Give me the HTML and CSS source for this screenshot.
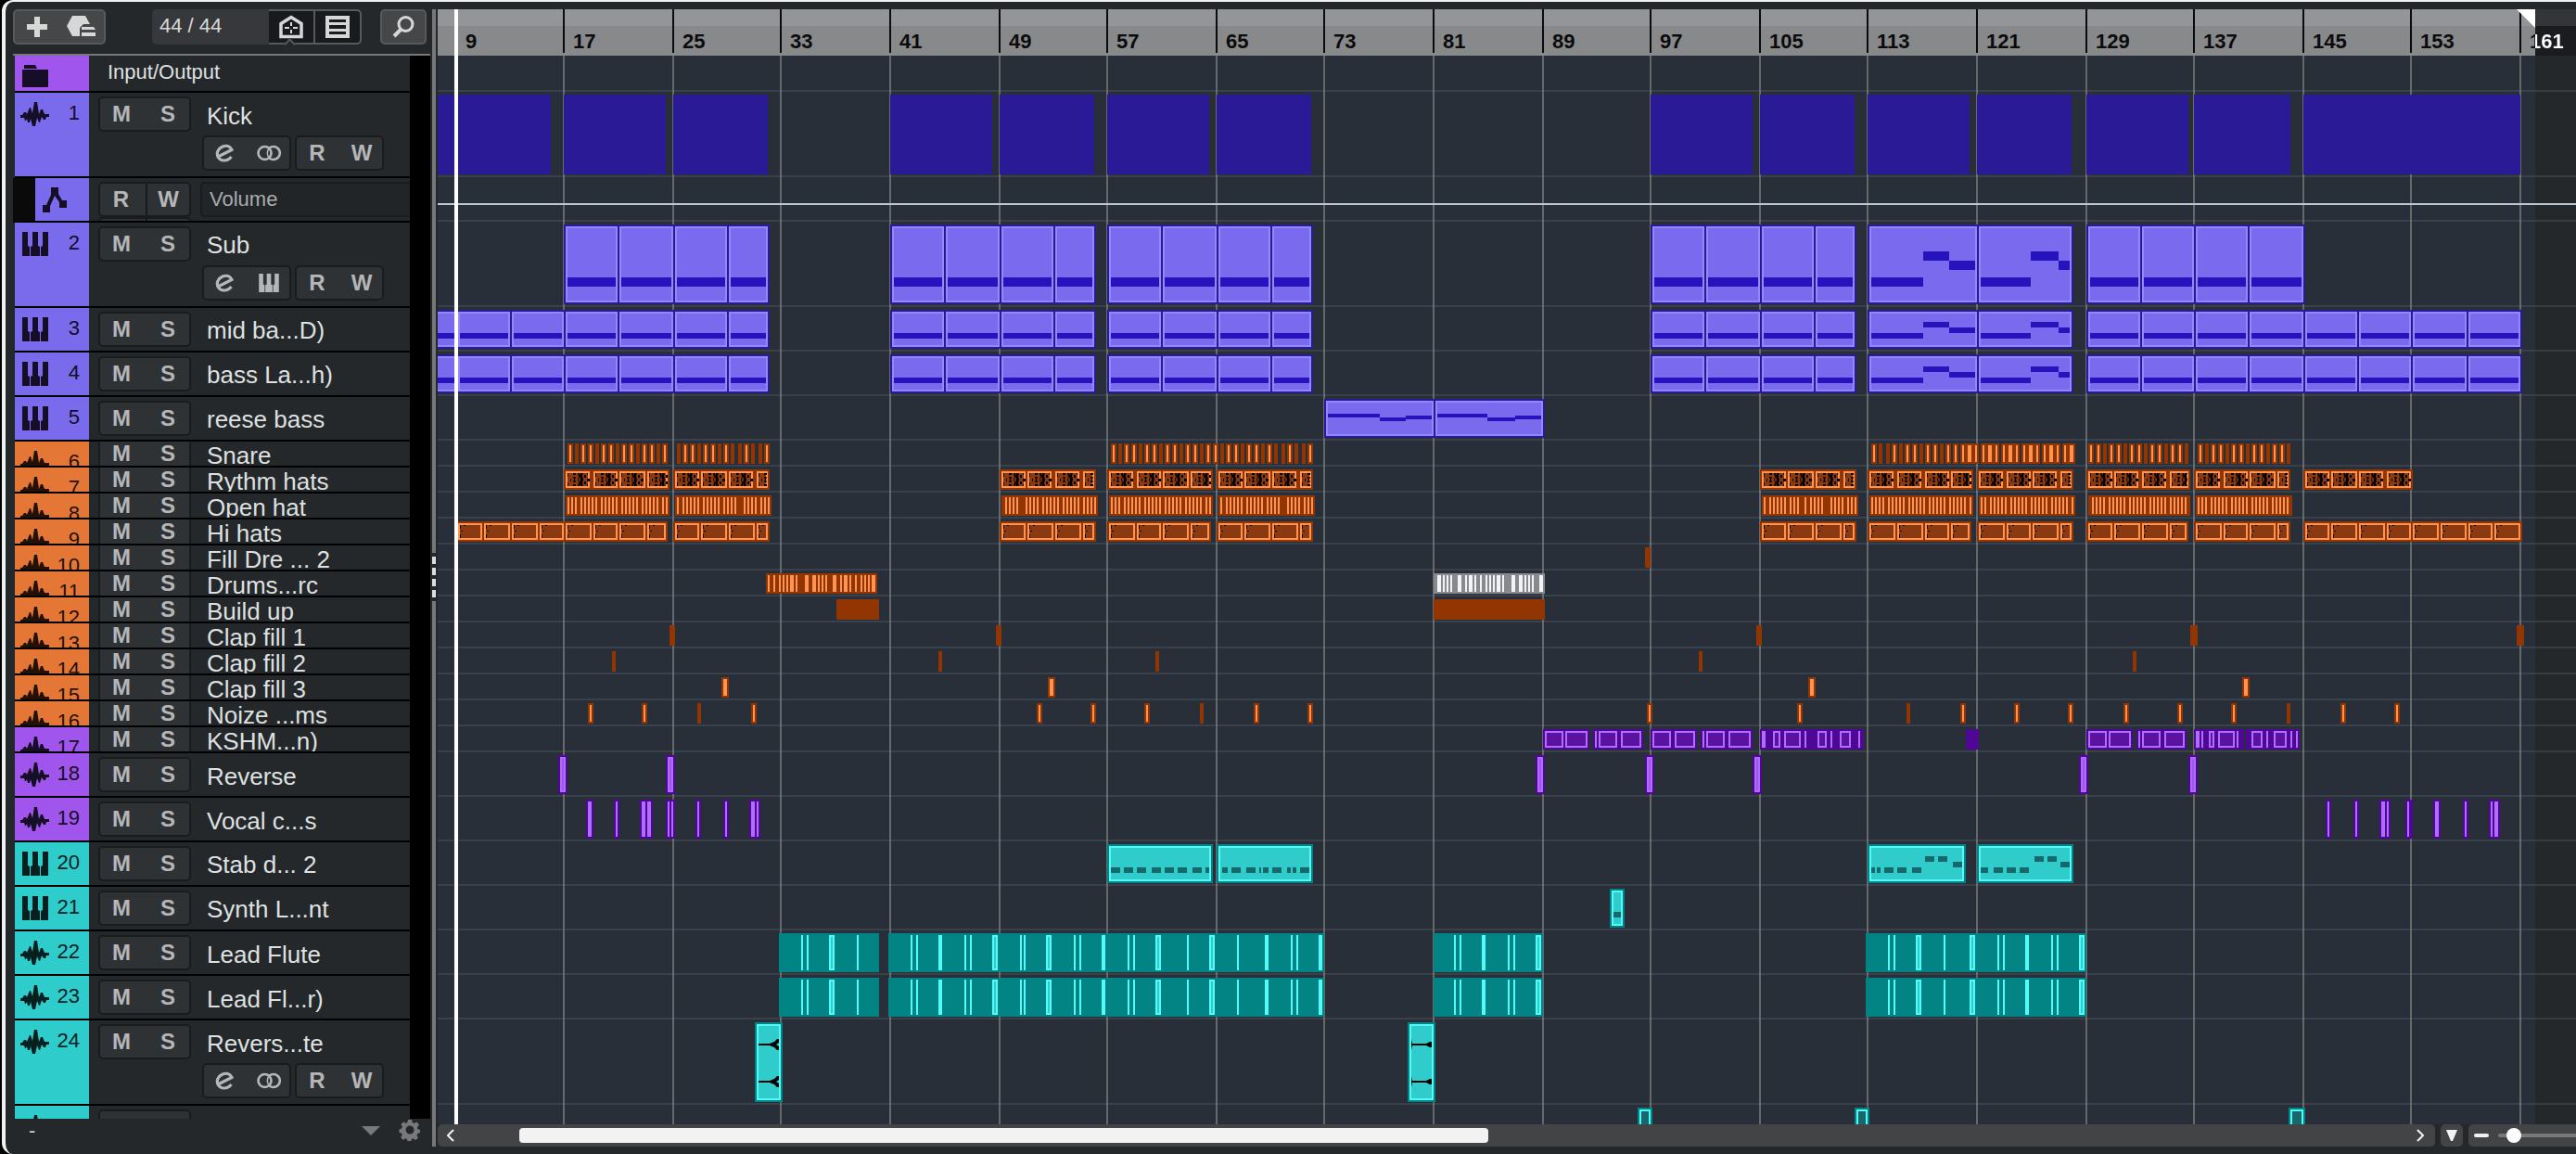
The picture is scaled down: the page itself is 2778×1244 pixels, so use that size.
FILE: index.html
```html
<!DOCTYPE html>
<html lang="en">

<head>
  <meta charset="UTF-8">
  <meta name="viewport" content="width=device-width, initial-scale=1.0">
  <title>Project</title>
  <link rel="stylesheet" href="styles.css">
</head>

<body>
  <svg class="defs" aria-hidden="true">
    <symbol id="i-wave" viewBox="0 0 31 26">
      <path d="M0 14h2l2-3h2l1 2 3-7h1l2 6 2-12h3l2 13 2-5h2l2 5h5v3h-3l-1 3h-2l-2-3-2 6h-1l-2-5-2 9h-3l-2-8-1 4h-2l-1-4-1 2H5l-1-3H0z" />
    </symbol>
    <symbol id="i-piano" viewBox="0 0 28 26">
      <path d="M0 0h6v15l2 1v10H0zM11 0h6v15l2 1v10H9V16l2-1zM22 0h6v26h-8V16l2-1z" />
    </symbol>
    <symbol id="i-folder" viewBox="0 0 28 26">
      <path d="M2 1h12l2 4H2zM0 6h28v19H0z" />
    </symbol>
    <symbol id="i-nodes" viewBox="0 0 26 27">
      <path d="M9 0h8v7l4 7h5v8h-8v-6l-5-7-5 11v7H0v-8h4l5-11z" />
    </symbol>
    <symbol id="i-e" viewBox="0 0 20 20">
      <path d="M3 14L18 6.5C16 2.5 12 1.300 8 3 3 5.200 1 10 3.200 14.500 6 19 13 19.500 17.500 14" fill="none" stroke="currentColor" stroke-width="3.200" />
    </symbol>
    <symbol id="i-rings" viewBox="0 0 27 18">
      <circle cx="8.500" cy="9" r="7" fill="none" stroke="currentColor" stroke-width="2.600" />
      <path d="M13.500 3.500a7 7 0 1 1 0 11" fill="none" stroke="currentColor" stroke-width="2.600" />
      <path d="M13.500 3.500a8 8 0 0 0 0 11" fill="none" stroke="currentColor" stroke-width="1.500" />
    </symbol>
    <symbol id="i-hat" viewBox="0 0 24 14">
      <path d="M0 0h1v4H0zM0 10h1v4H0zM3 6h1v3H3zM6 0h3v2H6zM6 4h3l-1 3 1 3H6l1-3zM6 12h3v2H6zM11 0h2v3l-1 4 1 4v3h-2l1-4-1-3 1-3zM14 0h3l-1 3 1 4-1 4 1 3h-3l-1-3 1-4-1-4zM18 2h2v3h-2zM18 9h2v3h-2zM21 6h3v3h-3zM21 0h1v2h-1zM21 12h1v2h-1z" />
    </symbol>
    <symbol id="i-tick" viewBox="0 0 24 14">
      <path d="M0 0h1v4H0zM0 10h1v4H0zM1 6h2v1H1zM4 0h2v1H4z" />
    </symbol>
    <symbol id="i-swell" viewBox="0 0 22 78">
      <path d="M0 19h12l5-2 3-3h2v4l-3 2 3 2v4h-2l-3-3-5-2H0zM0 59h12l5-2 3-3h2v4l-3 2 3 2v4h-2l-3-3-5-2H0z" />
    </symbol>
    <symbol id="i-pinch" viewBox="0 0 22 78">
      <path d="M0 14l1 5h15l4-2h2v6h-2l-4-2H1l-1 5zM0 54l1 5h15l4-2h2v6h-2l-4-2H1l-1 5z" />
    </symbol>
  </svg>

  <div class="app">
    <section class="panel">
      <header class="toolbar">
        <div class="group raised">
          <button aria-label="Add track">
            <svg width="22" height="22" viewBox="0 0 22 22"><path d="M8 0h6v8h8v6h-8v8H8v-8H0V8h8z" /></svg>
          </button>
          <button aria-label="Use track preset">
            <svg width="32" height="24" viewBox="0 0 32 24"><path d="M6 0h14l5 9h-7l-4 4v9H6L0 11z" /><path d="M16 12h13l2 3H16zM16 18h15v4H16z" /></svg>
          </button>
        </div>
        <span class="counter">44 / 44</span>
        <div class="group dark">
          <button aria-label="Track visibility">
            <svg width="26" height="26" viewBox="0 0 26 26"><path d="M2 23.500V9.500L13 2.500l11 7v14z" fill="none" stroke="currentColor" stroke-width="3.500" /><path d="M12 8h2v4h-2zM12 16h2v4h-2zM6 13h5v2H6zM15 13h5v2h-5z" /></svg>
            <i class="notch"></i>
          </button>
          <button aria-label="Track list">
            <svg width="26" height="24" viewBox="0 0 26 24"><path d="M0 0h26v24H0zM4 4v3h18V4zM4 10v4h18v-4zM4 17v3h18v-3z" fill-rule="evenodd" /></svg>
          </button>
        </div>
        <button class="search" aria-label="Find tracks">
          <svg width="24" height="24" viewBox="0 0 24 24"><circle cx="14.500" cy="9" r="7.500" fill="none" stroke="currentColor" stroke-width="3" /><path d="M9 15l-7 7" stroke="currentColor" stroke-width="4" /></svg>
        </button>
      </header>
      <div class="tracks" id="tracks"></div>
      <footer class="status">
        <span>-</span>
        <button class="caret" aria-label="Track presets"></button>
        <button aria-label="Track settings">
          <svg width="24" height="24" viewBox="0 0 24 24"><path d="M10 1h4l.7 3 2 .9 2.700-1.500 2.600 3.100-2 2.500.3 2 2.700 1v3l-2.700 1-.8 2 1.500 2.600-2.900 2.400-2.500-1.700-1.700.7-.6 3h-3.600l-.7-3-1.700-.8-2.700 1.600-2.400-2.800 1.600-2.500-.6-1.800-2.700-.9v-3.400l2.700-.8.7-1.900-1.500-2.600L5.300 3.300 7.600 4.900 9.300 4zM12 7.500a4.500 4.500 0 1 0 .1 9 4.500 4.500 0 0 0-.1-9z" fill-rule="evenodd" /></svg>
        </button>
      </footer>
    </section>

    <div class="splitter"><i></i><i></i><i></i><i></i></div>

    <main class="timeline">
      <div class="ruler" id="ruler"></div>
      <div class="lanes" id="lanes"></div>
      <div class="playhead"></div>
      <div class="bottom">
        <div class="scroll">
          <button aria-label="Scroll left"><svg width="8" height="14" viewBox="0 0 8 14"><path d="M7 1L1 7l6 6" fill="none" stroke="currentColor" stroke-width="2" /></svg></button>
          <div class="thumb"></div>
          <button aria-label="Scroll right"><svg width="8" height="14" viewBox="0 0 8 14"><path d="M1 1l6 6-6 6" fill="none" stroke="currentColor" stroke-width="2" /></svg></button>
        </div>
        <button class="zoom-menu" aria-label="Zoom presets"><svg width="12" height="12" viewBox="0 0 12 12"><path d="M0 0h12L7 12H5z" /></svg></button>
        <div class="zoom">
          <span class="minus"></span>
          <input type="range" aria-label="Horizontal zoom" min="0" max="100" value="13">
        </div>
      </div>
    </main>
  </div>

  <script src="app.js"></script>
</body>

</html>
```
FILE: styles.css
```css
* {
  box-sizing: border-box;
}

html,
body {
  height: 100%;
}

body {
  margin: 0;
  overflow: hidden;
  background: #000;
  color: #dfe0e0;
  font: 22px/26px "Liberation Sans", Arial, sans-serif;
}

button {
  display: flex;
  align-items: center;
  justify-content: center;
  margin: 0;
  padding: 0;
  border: 0;
  background: none;
  color: inherit;
  font: inherit;
}

svg {
  display: block;
  fill: currentColor;
}

.defs {
  position: absolute;
  width: 0;
  height: 0;
}

.app {
  display: flex;
  height: 100%;
  margin-left: 2px;
  padding-top: 8px;
  border-top: 2px solid #f0f1f2;
  border-left: 4px solid #f0f1f2;
  border-radius: 12px 0 0 12px;
  background: #24282b;
}

/* track list */

.panel {
  display: flex;
  flex-direction: column;
  width: 458px;
  flex: none;
  padding-left: 8px;
}

.toolbar {
  display: flex;
  height: 50px;
  flex: none;
  border-bottom: 2px solid #77787a;
  align-items: flex-start;
  color: #d6d8d8;
}

.group {
  display: flex;
  height: 38px;
}

.group button {
  flex: 1;
}

.raised,
.search {
  width: 100px;
  height: 38px;
  border: 2px solid #58595b;
  border-radius: 5px;
  background: #464749;
}

.counter {
  width: 126px;
  height: 38px;
  margin-left: 50px;
  padding: 5px 8px;
  border-radius: 5px 0 0 5px;
  background: #37383b;
}

.dark {
  width: 100px;
  border: 2px solid #58595b;
  border-left: 0;
  border-radius: 0 5px 5px 0;
  background: #191a1e;
}

.dark button {
  position: relative;
}

.dark button + button {
  border-left: 2px solid #58595b;
}

.notch {
  position: absolute;
  bottom: -6px;
  left: 18px;
  width: 9px;
  height: 9px;
  border: solid #58595b;
  border-width: 2px 0 0 2px;
  background: #24282b;
  transform: rotate(45deg);
}

.search {
  width: 50px;
  margin-left: 20px;
}

.tracks {
  flex: 1;
  min-height: 0;
  overflow: hidden;
  border-right: 22px solid #000;
}

.row {
  display: flex;
  margin-left: 2px;
  overflow: hidden;
  border-bottom: 2px solid #000;
}

.folder {
  height: 40px;
}

.tall {
  height: 92px;
}

.normal {
  height: 48px;
}

.short {
  height: 28px;
}

.tag {
  display: flex;
  width: 80px;
  flex: none;
  align-items: flex-start;
  justify-content: space-between;
  padding: 10px 10px 0 6px;
  color: #150e26;
}

.tag span {
  line-height: 24px;
}

.tag .i-piano,
.tag .i-folder {
  margin-left: 2px;
}

.folder .tag {
  padding-top: 9px;
}

.violet .tag {
  background: #a056ec;
}

.blue .tag {
  background: #7a6aec;
}

.orange .tag {
  background: #e57736;
  color: #241005;
}

.teal .tag {
  background: #2fcccc;
  color: #06201f;
}

.folder-name {
  padding: 5px 20px;
}

.controls {
  display: grid;
  grid-template-columns: 100px 1fr;
  grid-template-rows: 38px 38px;
  column-gap: 12px;
  row-gap: 4px;
  align-content: start;
  width: 346px;
  padding: 4px 0 0 10px;
}

.short .controls {
  margin-top: -10px;
}

.keys {
  display: flex;
  width: 100px;
  height: 38px;
  border: 2px solid #191b1d;
  border-radius: 5px;
  background: #2f3235;
  color: #b5b6b8;
  font-size: 24px;
  font-weight: bold;
}

.keys button {
  flex: 1;
}

.keys button:first-child {
  padding-right: 4px;
}

.name {
  padding-left: 5px;
  font-size: 26px;
  line-height: 40px;
}

.audio .name {
  line-height: 42px;
}

.extra {
  display: flex;
  grid-column: 2;
  gap: 4px;
}

.extra .keys {
  width: 96px;
}

.automation {
  margin-left: 0;
  border-left: 24px solid #0a0a0a;
}

.automation .tag {
  width: 58px;
  padding-left: 8px;
}

.automation .controls {
  column-gap: 10px;
  row-gap: 0;
}

.automation .keys button + button {
  border-left: 2px solid #191b1d;
}

.param {
  justify-content: flex-start;
  height: 38px;
  padding: 0 8px;
  border: 2px solid #191b1d;
  border-right: 0;
  border-radius: 5px 0 0 5px;
  background: #222528;
  color: #a9abac;
}

.status {
  display: flex;
  height: 38px;
  flex: none;
  align-items: flex-start;
  gap: 20px;
  padding-right: 10px;
  color: #77797b;
}

.status span {
  flex: 1;
  padding-left: 17px;
  color: #c8caca;
}

.caret {
  margin-top: 8px;
  border: 10px solid transparent;
  border-top-color: currentColor;
  border-bottom-width: 0;
}

/* splitter between list and timeline */

.splitter {
  display: flex;
  flex-direction: column;
  gap: 4px;
  width: 8px;
  flex: none;
  margin-bottom: 8px;
  border: solid #24282b;
  border-width: 0 2px;
  background: linear-gradient(#77787a 586px, #24282b 586px, #24282b 638px, #77787a 638px);
  padding-top: 590px;
}

.splitter i {
  height: 8px;
  background: #dcdddd;
}

/* timeline */

.timeline {
  position: relative;
  display: flex;
  flex: 1;
  flex-direction: column;
  min-width: 0;
  overflow: hidden;
}

.ruler {
  position: relative;
  height: 50px;
  flex: none;
  background: linear-gradient(#343538 18px, #1b1c1f 18px);
}

.ruler-range {
  height: 50px;
  background: linear-gradient(#949598 18px, #88898b 18px);
}

.ruler i {
  position: absolute;
  top: 0;
  width: 2px;
  height: 47px;
  background: #0b0b0b;
}

.ruler b {
  position: absolute;
  top: 22px;
  color: #0b0b0b;
}

.ruler .past-end {
  background: linear-gradient(90deg, #0b0b0b 6px, #fff 6px);
  background-clip: text;
  color: transparent;
}

.end-flag {
  position: absolute;
  top: 0;
  width: 20px;
  height: 20px;
  background: #fff;
  clip-path: polygon(0 0, 100% 0, 100% 100%);
}

.lanes {
  position: relative;
  flex: 1;
  min-height: 0;
  overflow: hidden;
  background: #24282a;
}

.song {
  position: absolute;
  top: 0;
  bottom: 0;
  left: 0;
  background: #282f38;
}

.grid {
  position: absolute;
  top: 0;
  bottom: 0;
  width: 2px;
  background: #666869;
}

.lane {
  position: relative;
  border-bottom: 2px solid rgba(120, 135, 150, .22);
}

.lane.folder {
  height: 39px;
}

.curve {
  position: absolute;
  top: 28px;
  left: 0;
  right: 0;
  height: 2px;
  background: #b9c8d2;
}

.clip {
  position: absolute;
  top: 3px;
  bottom: 1px;
  background: var(--edge);
}

.mark {
  position: absolute;
  top: 2px;
  bottom: 2px;
  overflow: hidden;
  background: var(--fill);
  box-shadow: inset 0 0 0 2px var(--rim);
}

.mark svg {
  margin: 2px;
  color: #000;
}

.note {
  position: absolute;
  background: var(--note);
}

.lane.blue {
  --edge: #2a1a96;
  --rim: #9388fb;
  --fill: #7a6aed;
  --note: #2713be;
}

.lane.orange {
  --edge: #913602;
  --rim: #ff9352;
  --fill: #8a3911;
}

.lane.violet {
  --edge: #4f0896;
  --rim: #b06cfa;
  --fill: #a056e6;
}

.lane.violet.short {
  --fill: #5c12a0;
}

.lane.teal {
  --edge: #028484;
  --rim: #54f9f8;
  --fill: #30cccc;
  --note: #17686a;
}

.lane.muted {
  --fill: #17686a;
}

.clip.selected {
  --edge: #88898c;
  --rim: #f2f3f8;
}

.playhead {
  position: absolute;
  top: 0;
  bottom: 32px;
  left: 18px;
  width: 4px;
  background: #fff;
}

.bottom {
  display: flex;
  gap: 6px;
  height: 24px;
  flex: none;
  margin-bottom: 8px;
  color: #f2f2f2;
}

.scroll {
  display: flex;
  flex: 1;
  align-items: center;
  padding: 0 12px 0 10px;
  border-radius: 5px;
  background: #434446;
}

.thumb {
  width: 49%;
  height: 16px;
  margin-left: 70px;
  margin-right: auto;
  border-radius: 4px;
  background: #f2f2f2;
}

.zoom-menu {
  width: 24px;
  border-radius: 5px;
  background: #434446;
}

.zoom {
  display: flex;
  align-items: center;
  gap: 10px;
  width: 116px;
  padding-left: 6px;
  border-radius: 5px 0 0 5px;
  background: #434446;
}

.minus {
  width: 16px;
  height: 4px;
  flex: none;
  border-radius: 2px;
  background: #f2f2f2;
}

.zoom input {
  width: 100%;
  min-width: 0;
  height: 4px;
  margin: 0;
  border-radius: 2px 0 0 2px;
  appearance: none;
  background: #77787a;
}

.zoom input::-webkit-slider-thumb {
  width: 16px;
  height: 16px;
  appearance: none;
  border-radius: 50%;
  background: #fff;
}
```
FILE: app.js
```js
const LEFT = 472 // clip positions below are window x, the timeline starts here
const BAR = 14.65
const SONG_END = 2734

// bars are snapped to a 2px raster
const snap = bar => 2 * Math.round((608.3 + (bar - 17) * BAR) / 2)

const box = (from, to, extra) => ({ from, to, marks: [[from + 2, to - from - 4]], ...extra })
const solid = (...spans) => spans.map(([from, to]) => ({ from, to, marks: [] }))
const block = (from, to, marks) => ({ from, to, marks: marks.map(m => Array.isArray(m) ? m : [m, 2]) })

// a clip of the given bars, with its notes as [bar from, bar to, top, height]
function part(a, b, notes = [], extra) {
  const from = snap(a), to = snap(b) + 2
  return box(from, to, {
    notes: notes.map(([n1, n2, top, h]) => {
      const x = Math.max(snap(a + n1), from + 4)
      return [x, Math.min(snap(a + n2), to - 4) - x, top, h]
    }),
    ...extra
  })
}

function bass(tall, starts) {
  const h = tall ? 10 : 6
  const [low, mid, high] = tall ? [57, 39, 29] : [25, 19, 13]
  const list = starts.map(s => {
    const end = [29, 53, 69, 109].includes(s) ? s + 3 : s + 4
    return part(s, end, [[0, 5, low, h]])
  })
  const step = [[0, 4, low, h], [4, 6, high, h], [6, 8, mid, h]]
  return [...list, part(113, 121, step), part(121, 128, step)]
}
const bassStarts = [17, 21, 25, 29, 41, 45, 49, 53, 57, 61, 65, 69, 97, 101, 105, 109, 129, 133, 137, 141]
const midStarts = [5, 9, 13, ...bassStarts, 145, 149, 153, 157]

function hits(from, to, len = .22) {
  const list = []
  for (let b = from; b < to; b += .5) list.push(part(b, b + len))
  return list
}

// two-bar loops: long phrases run almost 8 bars, the others stop after 7
function loops(starts, len, longEnd, wave) {
  return starts.flatMap(([s, bars]) => [0, 2, 4, 6].map(o => {
    const end = o < 6 ? o + len : bars === 8 ? longEnd : bars === 16 ? 8 : 7
    return part(s + o, s + end, [], { wave })
  }))
}
const phrases = [[17, 8], [25, 7], [49, 7], [57, 8], [65, 7], [105, 7], [113, 8], [121, 7], [129, 8], [137, 7]]

// thin clips in runs, 4px apart, with 2px more after each run
function stripes(from, to, x, runs) {
  const marks = []
  runs.forEach(n => {
    for (let i = 0; i < n; i++) marks.push(x + i * 4)
    x += n * 4 + 2
  })
  return block(from, to, marks)
}

const reese = [[0, 4, 16, 4], [4, 6, 20, 4], [6, 8, 18, 4]]
const row = (top, xs) => xs.map(([a, b]) => [a, b - a, top, 6])
const narrow = (w, xs) => xs.map(x => box(x, x + w))

const flute = [
  block(840, 948, [864, 870, [894, 6], 924]),
  block(958, 1428, [982, 988, [1012, 4], 1040, 1046, [1070, 6], 1100, 1104, [1128, 6], 1158, 1164, [1188, 4],
    1216, 1222, [1246, 6], 1280, [1304, 6], 1334, [1364, 4], 1392, 1398, [1422, 4]]),
  block(1546, 1664, [1568, 1574, [1598, 4], 1626, 1632, [1656, 6]]),
  block(2012, 2250, [2036, 2042, [2066, 6], 2096, [2124, 6], 2154, 2160, [2184, 4], 2212, 2218, [2242, 6]])
]

const tracks = [
  { size: 'folder', color: 'violet', name: 'Input/Output', icon: 'folder' },
  {
    n: 1, size: 'tall', color: 'blue', name: 'Kick',
    clips: solid([472, 594], [608, 718], [726, 828], [960, 1070], [1078, 1180], [1194, 1304], [1312, 1414],
      [1780, 1890], [1898, 2000], [2014, 2124], [2132, 2234], [2250, 2360], [2366, 2470], [2484, 2718])
  },
  { size: 'normal', color: 'blue', name: 'Volume', icon: 'nodes', automation: true },
  { n: 2, size: 'tall', color: 'blue', name: 'Sub', icon: 'piano', clips: bass(true, bassStarts) },
  { n: 3, size: 'normal', color: 'blue', name: 'mid ba...D)', icon: 'piano', clips: bass(false, midStarts) },
  { n: 4, size: 'normal', color: 'blue', name: 'bass La...h)', icon: 'piano', clips: bass(false, midStarts) },
  { n: 5, size: 'normal', color: 'blue', name: 'reese bass', icon: 'piano', clips: [part(73, 81, reese), part(81, 89, reese)] },
  {
    n: 6, size: 'short', color: 'orange', name: 'Snare',
    clips: [...hits(17.25, 24.5), ...hits(25.25, 32), ...hits(57.25, 72), ...hits(113.25, 120), ...hits(119.75, 128, .32),
      ...hits(129.25, 136.5), ...hits(137.25, 144)]
  },
  { n: 7, size: 'short', color: 'orange', name: 'Rythm hats', clips: loops([...phrases, [145, 16]], 1.93, 7.6, 'hat') },
  {
    n: 8, size: 'short', color: 'orange', name: 'Open hat',
    clips: [
      stripes(610, 722, 612, [3, 5, 5, 5, 5, 2]),
      stripes(728, 832, 730, [1, 5, 5, 4, 0, 0, 4, 3]),
      stripes(1080, 1184, 1084, [4, 0, 0, 4, 5, 5, 4]),
      stripes(1196, 1308, 1198, [3, 5, 5, 5, 5, 2]),
      stripes(1314, 1418, 1316, [1, 5, 5, 4, 0, 0, 4, 3]),
      stripes(1900, 2004, 1902, [1, 5, 3, 0, 1, 4, 0, 0, 4, 3]),
      stripes(2016, 2128, 2018, [4, 5, 5, 5, 5, 1]),
      stripes(2134, 2238, 2136, [2, 5, 5, 5, 5, 1]),
      stripes(2252, 2362, 2256, [4, 5, 5, 5, 5]),
      stripes(2368, 2472, 2370, [3, 5, 5, 5, 5])
    ]
  },
  {
    n: 9, size: 'short', color: 'orange', name: 'Hi hats',
    clips: loops([[9, 16], ...phrases, [145, 16], [153, 16]], 2, 7.5, 'tick')
  },
  { n: 10, size: 'short', color: 'orange', name: 'Fill Dre ... 2', clips: solid([1774, 1780]) },
  {
    n: 11, size: 'short', color: 'orange', name: 'Drums...rc',
    clips: [
      block(826, 946, [828, 834, 840, 844, 848, [852, 4], 858, [868, 4], [876, 4], 882, 886, 890, [898, 4], 906,
        [910, 4], 916, 922, 928, 932, 936, [940, 4]]),
      {
        ...block(1546, 1666, [[1550, 4], 1556, 1560, 1564, [1572, 4], 1580, [1584, 4], 1590, 1596, 1602, 1606, 1610,
          [1614, 4], 1620, [1630, 4], [1638, 4], 1644, 1648, 1652, [1660, 4]]), selected: true
      }
    ]
  },
  { n: 12, size: 'short', color: 'orange', name: 'Build up', clips: solid([902, 948], [1546, 1666]) },
  {
    n: 13, size: 'short', color: 'orange', name: 'Clap fill 1',
    clips: solid([722, 728], [1074, 1080], [1894, 1900], [2362, 2370], [2714, 2722])
  },
  {
    n: 14, size: 'short', color: 'orange', name: 'Clap fill 2',
    clips: solid([660, 664], [1012, 1016], [1246, 1250], [1832, 1836], [2300, 2304])
  },
  { n: 15, size: 'short', color: 'orange', name: 'Clap fill 3', clips: narrow(8, [778, 1130, 1950, 2418]) },
  {
    n: 16, size: 'short', color: 'orange', name: 'Noize ...ms',
    clips: [
      ...narrow(6, [634, 692, 810, 1118, 1176, 1234, 1352, 1410, 1776, 1938, 2114, 2172, 2230, 2290, 2348, 2406, 2524, 2582]),
      ...solid([752, 756], [1294, 1298], [2056, 2060], [2466, 2470])
    ]
  },
  {
    n: 17, size: 'short', color: 'violet', name: 'KSHM...n)',
    clips: [
      block(1664, 1714, [[1666, 20], [1688, 24]]),
      block(1718, 1772, [1720, [1724, 20], [1748, 22]]),
      block(1780, 1830, [[1782, 20], [1806, 22]]),
      block(1834, 1890, [1836, [1840, 20], [1864, 24]]),
      block(1898, 2010, [[1900, 4], [1912, 8], [1924, 18], 1946, [1960, 10], 1974, [1984, 12], 2004]),
      ...solid([2120, 2134]),
      block(2250, 2300, [[2252, 20], [2274, 24]]),
      block(2304, 2358, [2306, [2310, 20], [2334, 22]]),
      block(2366, 2420, [[2368, 4], 2374, [2382, 6], [2392, 18], 2412]),
      block(2422, 2480, [[2428, 12], 2444, [2452, 14], 2470, 2476])
    ]
  },
  { n: 18, size: 'normal', color: 'violet', name: 'Reverse', clips: narrow(10, [602, 718, 1656, 1774, 1890, 2242, 2360]) },
  {
    n: 19, size: 'normal', color: 'violet', name: 'Vocal c...s',
    clips: [
      ...narrow(8, [632, 2624]),
      ...narrow(6, [662, 750, 780, 2508, 2538, 2656]),
      block(690, 704, [[692, 4], [698, 4]]),
      block(718, 728, [720, 724]),
      block(808, 820, [[810, 4], 816]),
      block(2566, 2578, [[2568, 4], 2574]),
      block(2594, 2602, [2596]),
      block(2684, 2696, [2686, [2690, 4]])
    ]
  },
  {
    n: 20, size: 'normal', color: 'teal', name: 'Stab d... 2', icon: 'piano',
    clips: [
      box(1194, 1308, {
        notes: row(25, [[1198, 1208], [1212, 1222], [1226, 1236], [1242, 1252], [1256, 1266], [1270, 1280], [1286, 1296], [1300, 1304]])
      }),
      box(1312, 1416, {
        notes: row(25, [[1318, 1324], [1328, 1338], [1344, 1354], [1358, 1360], [1362, 1368], [1372, 1382], [1388, 1392],
          [1394, 1398], [1402, 1412]])
      }),
      box(2014, 2120, {
        notes: [
          ...row(25, [[2018, 2022], [2024, 2028], [2032, 2042], [2046, 2056], [2062, 2072]]),
          ...row(13, [[2076, 2086], [2090, 2100]]),
          ...row(19, [[2106, 2116]])
        ]
      }),
      box(2132, 2236, {
        notes: [
          ...row(25, [[2136, 2144], [2150, 2160], [2164, 2174], [2178, 2188]]),
          ...row(13, [[2194, 2204], [2208, 2218]]),
          ...row(19, [[2222, 2232]])
        ]
      })
    ]
  },
  {
    n: 21, size: 'normal', color: 'teal', name: 'Synth L...nt', icon: 'piano',
    clips: [box(1736, 1752, { notes: row(25, [[1740, 1748]]) })]
  },
  { n: 22, size: 'normal', color: 'teal', name: 'Lead Flute', clips: flute },
  { n: 23, size: 'normal', color: 'teal', name: 'Lead Fl...r)', clips: flute },
  {
    n: 24, size: 'tall', color: 'teal', name: 'Revers...te',
    clips: [box(814, 844, { wave: 'swell' }), box(1518, 1548, { wave: 'pinch' })]
  },
  { n: 25, size: 'normal', color: 'teal', name: '', muted: true, clips: [box(1766, 1782), box(2000, 2016), box(2468, 2486)] }
]

const iconSize = {
  wave: [31, 26], piano: [28, 26], folder: [28, 26], nodes: [26, 27], e: [20, 20], rings: [27, 18],
  hat: [24, 14], tick: [24, 14], swell: [22, 78], pinch: [22, 78]
}

function icon(name, w = iconSize[name][0], h = iconSize[name][1]) {
  return `<svg class="i-${name}" width="${w}" height="${h}" aria-hidden="true"><use href="#i-${name}"/></svg>`
}

const keys = (a, b) => `<div class="keys"><button>${a}</button><button>${b}</button></div>`

function rowHtml(t) {
  const ic = t.icon || 'wave'
  const tag = `<div class="tag">${icon(ic)}${t.n ? `<span>${t.n}</span>` : ''}</div>`
  if (t.size === 'folder') {
    return `<div class="row folder ${t.color}">${tag}<span class="folder-name">${t.name}</span></div>`
  }
  if (t.automation) {
    return `<div class="row automation ${t.size} ${t.color}">${tag}
      <div class="controls">${keys('R', 'W')}<button class="param">${t.name}</button>${keys('', '')}</div></div>`
  }
  const extra = t.size === 'tall'
    ? `<div class="extra">${keys(icon('e'), ic === 'piano' ? icon('piano', 22, 20) : icon('rings'))}${keys('R', 'W')}</div>`
    : ''
  return `<div class="row ${t.size} ${t.color} ${ic === 'wave' ? 'audio' : ''}">${tag}
    <div class="controls">${keys('M', 'S')}<span class="name">${t.name}</span>${extra}</div></div>`
}

function clipHtml(c) {
  const marks = c.marks.filter(([, w]) => w > 0).map(([x, w]) =>
    `<div class="mark" style="left:${x - c.from}px;width:${w}px">${c.wave ? icon(c.wave) : ''}</div>`)
  const notes = (c.notes || []).map(([x, w, top, h]) =>
    `<div class="note" style="left:${x - c.from}px;width:${w}px;top:${top}px;height:${h}px"></div>`)
  return `<div class="clip ${c.selected ? 'selected' : ''}" style="left:${c.from - LEFT}px;width:${c.to - c.from}px">${marks.join('')}${notes.join('')}</div>`
}

function laneHtml(t) {
  const body = t.automation ? '<div class="curve"></div>' : (t.clips || []).map(clipHtml).join('')
  return `<div class="lane ${t.size} ${t.color} ${t.muted ? 'muted' : ''}">${body}</div>`
}

let ruler = `<div class="ruler-range" style="width:${SONG_END - LEFT}px"></div>`
let grid = `<div class="song" style="width:${SONG_END - LEFT}px"></div>`
for (let bar = 9; bar <= 161; bar += 8) {
  const x = snap(bar) - 1 - LEFT
  ruler += `<i style="left:${x}px"></i><b class="${bar === 161 ? 'past-end' : ''}" style="left:${x + 11}px">${bar}</b>`
  grid += `<div class="grid" style="left:${x}px"></div>`
}
ruler += `<div class="end-flag" style="left:${SONG_END - 20 - LEFT}px"></div>`

document.querySelector('#ruler').innerHTML = ruler
document.querySelector('#tracks').innerHTML = tracks.map(rowHtml).join('')
document.querySelector('#lanes').innerHTML = grid + tracks.map(laneHtml).join('')
```
